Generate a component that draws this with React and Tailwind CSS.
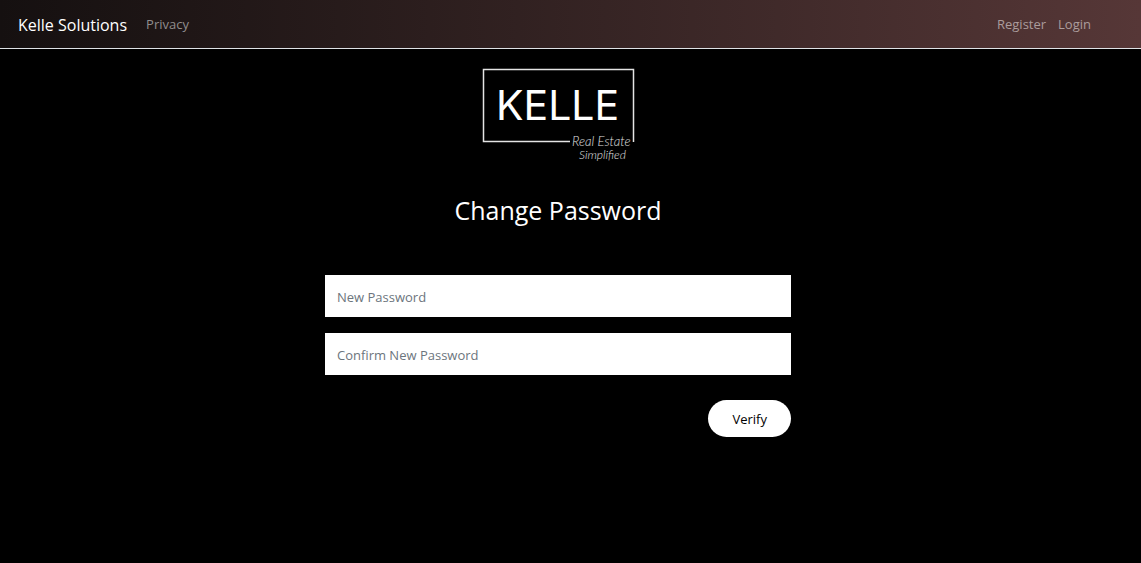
function Logo() {
  return (
    <svg
      className="h-[96px] w-[154px]"
      viewBox="0 0 154 96"
      role="img"
      aria-label="Kelle, Real Estate Simplified"
    >
      <path d="M89 74.5H2.5V2.5H152.5V75" fill="none" stroke="#e4e4e4" strokeWidth="1.5" />
      <text x="15" y="53" fill="#fff" fontSize="41" fontWeight="400" fontFamily="Inter, sans-serif">
        KELLE
      </text>
      <g fill="#e0e0e0" fontSize="13" fontStyle="italic" fontWeight="300" fontFamily="Lato, sans-serif">
        <text x="91" y="79">Real Estate</text>
        <text x="98" y="92" fontSize="12">Simplified</text>
      </g>
    </svg>
  );
}

function PasswordField({ label }) {
  return (
    <input
      type="password"
      aria-label={label}
      placeholder={label}
      className="block w-full bg-white px-3 pt-3 pb-2.5 text-[13px] leading-5 text-[#212529] placeholder:text-[#6c757d]"
    />
  );
}

export default function App() {
  return (
    <div className="min-h-screen bg-black font-['Open_Sans',sans-serif] text-white">
      <header className="border-b border-[#dee2e6] bg-linear-to-r from-[#151010] to-[#563737]">
        <nav className="flex h-12 items-center pt-px pr-[50px] pl-[18px]">
          <a href="#" className="text-base">
            Kelle Solutions
          </a>
          <a href="#" className="ml-[19px] text-[13px] text-[#908d8d]">
            Privacy
          </a>
          <div className="ml-auto flex gap-3 text-[13px] text-[#ab9c9c]">
            <a href="#">Register</a>
            <a href="#">Login</a>
          </div>
        </nav>
      </header>
      <main className="flex flex-col items-center pt-[18px] pr-[25px]">
        <Logo />
        <h1 className="mt-[29px] text-[25px] leading-9">Change Password</h1>
        <form className="mt-[47px] flex w-full max-w-[466px] flex-col gap-4" onSubmit={(e) => e.preventDefault()}>
          <PasswordField label="New Password" />
          <PasswordField label="Confirm New Password" />
          <button
            type="submit"
            className="mt-[9px] self-end rounded-full bg-white px-6 pt-[9px] pb-2 text-[13px] leading-5 text-black"
          >
            Verify
          </button>
        </form>
      </main>
    </div>
  );
}
